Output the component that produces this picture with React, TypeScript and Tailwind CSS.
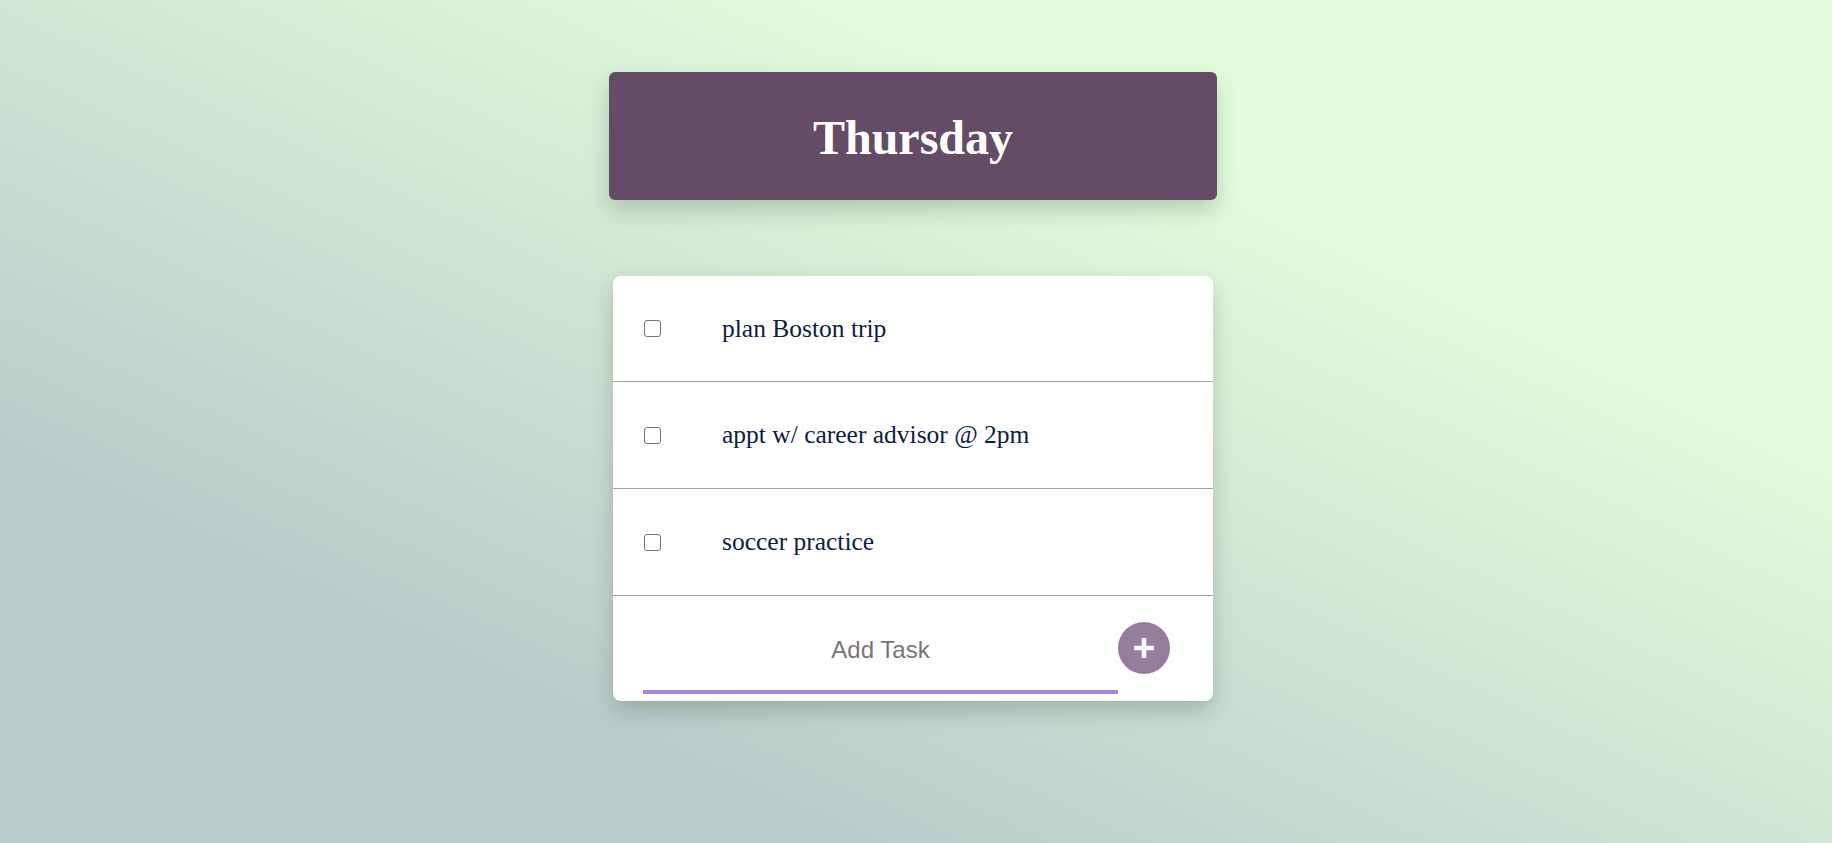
import { useState } from "react";

const TASKS = ["plan Boston trip", "appt w/ career advisor @ 2pm", "soccer practice"];

function TaskRow({ label, first }: { label: string; first?: boolean }) {
  const [done, setDone] = useState(false);
  return (
    <div
      className={`flex items-center pl-[31px] border-b border-[#a3a3a3] ${first ? "h-[106px]" : "h-[107px]"}`}
    >
      <div className="w-[78px] flex items-center">
        <button
          onClick={() => setDone(!done)}
          className="w-[17px] h-[17px] rounded-[3px] border-[1.5px] border-[#737373] bg-white"
        />
      </div>
      <span className="text-[25.5px] text-[#0c1d48] font-['Liberation_Serif',serif] leading-none">
        {label}
      </span>
    </div>
  );
}

export default function App() {
  return (
    <main className="min-h-screen w-full bg-[linear-gradient(to_top_right,#b9cbca_22%,#e3fddc_74%)] pt-[72px] pb-[140px]">
      <div className="flex flex-col items-center pr-[6px]">
        {/* Day header */}
        <div className="w-[608px] h-[128px] rounded-[6px] bg-[#644c66] shadow-[0_10px_22px_rgba(0,0,0,0.18)] flex items-center justify-center">
          <h1 className="text-[48px] font-bold text-white font-['Liberation_Serif',serif] leading-none pt-[3px]">
            Thursday
          </h1>
        </div>

        {/* Task card */}
        <div className="mt-[76px] w-[600px] bg-white rounded-[8px] shadow-[0_10px_22px_rgba(0,0,0,0.18)] overflow-hidden">
          {TASKS.map((t, i) => (
            <TaskRow key={t} label={t} first={i === 0} />
          ))}

          <div className="h-[105px] flex items-start pl-[30px] pt-[26px]">
            <div className="w-[475px] flex flex-col">
              <input
                placeholder="Add Task"
                className="h-[56px] w-full text-center text-[24px] font-['Liberation_Sans',sans-serif] text-[#333] placeholder:text-[#777] outline-none"
              />
              <div className="h-[4px] mt-[12px] bg-[#a885e0]" />
            </div>
            <button className="w-[52px] h-[52px] rounded-full bg-[#967d9c] flex items-center justify-center">
              <svg width="22" height="22" viewBox="0 0 22 22">
                <path d="M11 1v20M1 11h20" stroke="white" strokeWidth="4.5" />
              </svg>
            </button>
          </div>
        </div>
      </div>
    </main>
  );
}
